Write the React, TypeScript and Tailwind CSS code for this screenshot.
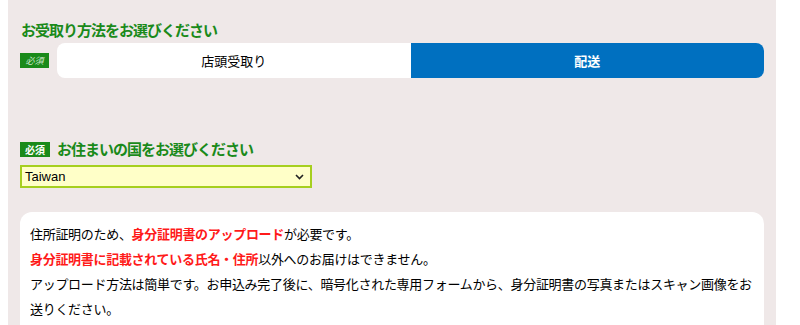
import React from "react";

export default function App() {
  const jp = { fontFamily: '"Noto Sans CJK JP", "Noto Sans", sans-serif' };
  return (
    <div className="w-[800px] h-[325px] bg-white overflow-hidden" style={jp}>
      <div className="ml-2 w-[768px] h-[325px] bg-[#efe8e8] px-3 pt-[19px]">
        <h2 className="pl-px text-[15px] leading-[22px] font-bold text-[#1a8a1a] tracking-[-1px]">
          お受取り方法をお選びください
        </h2>
        <div className="mt-[2px] flex items-center gap-2">
          <span className="w-[29px] h-[15px] bg-[#1a8a1a] text-[#cfe8cf] text-[9px] leading-[15px] italic text-center">
            必須
          </span>
          <div className="flex-1 flex h-[35px]">
            <div className="flex-1 bg-white rounded-l-[8px] flex items-center justify-center text-[13px] text-black">
              店頭受取り
            </div>
            <div className="flex-1 bg-[#0070c0] rounded-r-[8px] flex items-center justify-center text-[13px] font-bold text-white">
              配送
            </div>
          </div>
        </div>

        <div className="mt-[62px] flex items-center gap-[7px]">
          <span className="w-[30px] h-[15px] bg-[#1a8a1a] text-white text-[10px] leading-[15px] font-bold text-center">
            必須
          </span>
          <h2 className="text-[15px] leading-[18px] font-bold text-[#1a8a1a] tracking-[-1px]">
            お住まいの国をお選びください
          </h2>
        </div>
        <div className="mt-[7px] w-[292px] h-[23px] border-2 border-[#a6cf1f] bg-[#ffffc8] flex items-center justify-between pl-[3px] pr-[6px]">
          <span className="text-[13px] text-black" style={{ fontFamily: '"Liberation Sans", Arial, sans-serif' }}>
            Taiwan
          </span>
          <svg width="9" height="6" viewBox="0 0 9 6" fill="none">
            <path d="M1 1l3.5 3.5L8 1" stroke="#222" strokeWidth="1.6" />
          </svg>
        </div>

        <div className="mt-[24px] bg-white rounded-[12px] px-[10px] pt-[9px] pb-4 text-[13px] leading-[25px] text-black tracking-[-0.3px]">
          <p>
            住所証明のため、<span className="text-[#ff1a1a] font-bold">身分証明書のアップロード</span>が必要です。
          </p>
          <p>
            <span className="text-[#ff1a1a] font-bold">身分証明書に記載されている氏名・住所</span>以外へのお届けはできません。
          </p>
          <p>
            アップロード方法は簡単です。お申込み完了後に、暗号化された専用フォームから、身分証明書の写真またはスキャン画像をお
            <br />
            送りください。
          </p>
        </div>
      </div>
    </div>
  );
}
